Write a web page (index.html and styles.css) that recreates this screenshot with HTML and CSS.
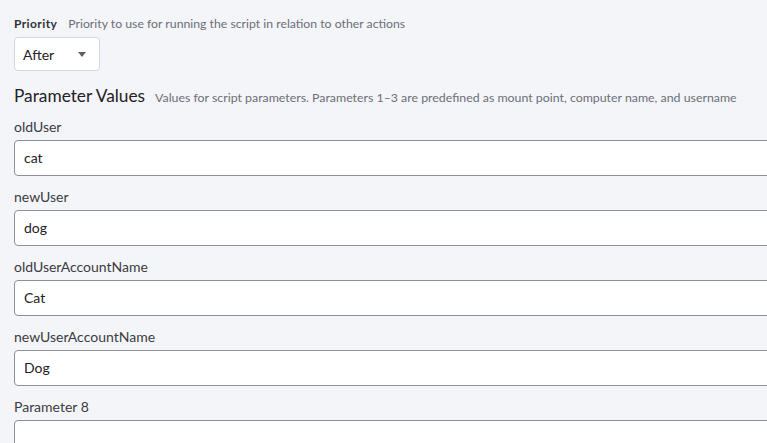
FILE: index.html
```html
<!DOCTYPE html>
<html>
<head>
<meta charset="utf-8">
<link rel="stylesheet" href="styles.css">
</head>
<body>
<div class="page">
  <div class="row-head">
    <span class="lbl-bold">Priority</span>
    <span class="hint">Priority to use for running the script in relation to other actions</span>
  </div>
  <div class="select">
    <span>After</span>
    <svg class="caret" width="8" height="5" viewBox="0 0 8 5"><path d="M0 0 L8 0 L4 5 Z" fill="#5b6070"/></svg>
  </div>
  <div class="section-head">
    <span class="h2">Parameter Values</span>
    <span class="h2-hint">Values for script parameters. Parameters 1–3 are predefined as mount point, computer name, and username</span>
  </div>
  <div class="field"><div class="flabel">oldUser</div><div class="input">cat</div></div>
  <div class="field"><div class="flabel">newUser</div><div class="input">dog</div></div>
  <div class="field"><div class="flabel">oldUserAccountName</div><div class="input">Cat</div></div>
  <div class="field"><div class="flabel">newUserAccountName</div><div class="input">Dog</div></div>
  <div class="field"><div class="flabel">Parameter 8</div><div class="input"></div></div>
</div>
</body>
</html>
```
FILE: styles.css
```css
html, body { margin: 0; padding: 0; }
body {
  background: #f4f5f9;
  font-family: Lato, "Open Sans", sans-serif;
  color: #222;
  overflow: hidden;
  width: 767px;
  height: 443px;
}
.page { padding: 16px 0 0 14px; }
.row-head { display: flex; align-items: baseline; gap: 11px; height: 15px; line-height: 15px; }
.lbl-bold { font-size: 12px; font-weight: 700; color: #2f3137; letter-spacing: 0.4px; }
.hint { font-size: 12.25px; color: #6b6e76; }
.select {
  margin-top: 6px;
  height: 32px;
  background: #fff;
  border: 1px solid #d3d6de;
  border-radius: 4px;
  display: flex; align-items: center; justify-content: space-between;
  padding: 0 13px 0 8px;
  width: 63px;
  font-size: 14px; color: #1f2126;
}
.section-head { margin-top: 15px; display: flex; align-items: baseline; gap: 10px; height: 20px; line-height: 20px; }
.h2 { font-size: 17.3px; color: #1f2126; }
.h2-hint { font-size: 12.35px; color: #6b6e76; }
.field { margin-top: 14px; }
.flabel { font-size: 14px; line-height: 14px; height: 14px; color: #3a3c42; }
.input {
  margin-top: 6px;
  width: 800px; height: 34px;
  background: #fff;
  border: 1px solid #8e9097;
  border-radius: 4px;
  padding-left: 9px;
  font-size: 14px; line-height: 34px; color: #1f2126;
}
```
